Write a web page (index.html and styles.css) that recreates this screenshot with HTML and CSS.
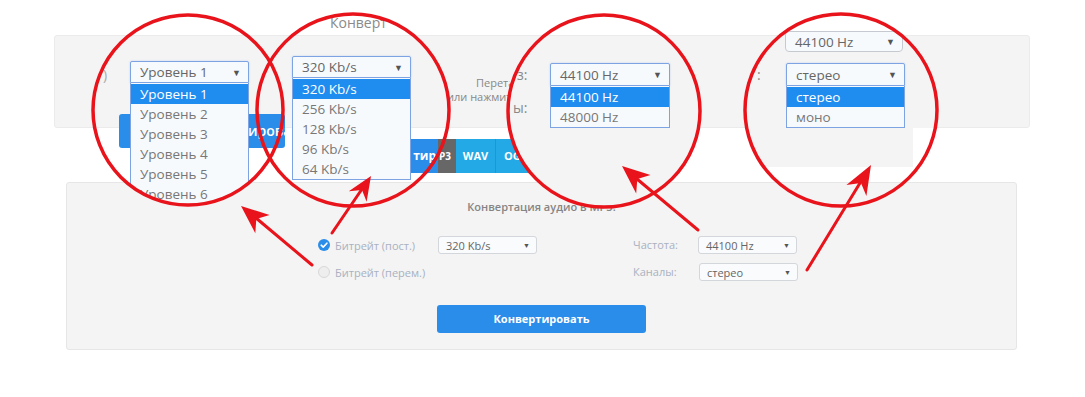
FILE: index.html
```html
<!DOCTYPE html>
<html lang="ru">
<head>
<meta charset="utf-8">
<title>Конвертация аудио в MP3</title>
<link rel="stylesheet" href="styles.css">
</head>
<body>
<div class="page">
  <div class="top-panel">
    <div class="hint">
      <span class="hint-l1">Перетащите</span>
      <span>или нажмите</span>
    </div>
  </div>
  <div class="mid-row">
    <div class="btn-top">Конвертировать</div>
    <div class="tabs">
      <div class="tab tab-blue">тир</div>
      <div class="tab tab-dark">P3</div>
      <div class="tab tab-wav">WAV</div>
      <div class="tab tab-ogg">OGG</div>
    </div>
  </div>
  <div class="panel">
    <div class="panel-title">Конвертация аудио в MP3:</div>
    <div class="form">
      <div class="form-left">
        <div class="radio-label"><span class="radio radio-on"><svg width="12" height="12" viewBox="0 0 12 12"><path d="M3.2 6.2 L5.2 8.1 L8.9 4.2" fill="none" stroke="#fff" stroke-width="1.6" stroke-linecap="round" stroke-linejoin="round"/></svg></span>Битрейт (пост.)</div>
        <div class="sel-sm"><span>320 Kb/s</span><span class="arrow-sm">▼</span></div>
        <div class="radio-label"><span class="radio radio-off"></span>Битрейт (перем.)</div>
        <div></div>
      </div>
      <div class="form-right">
        <div class="field-label">Частота:</div>
        <div class="sel-sm"><span>44100 Hz</span><span class="arrow-sm">▼</span></div>
        <div class="field-label">Каналы:</div>
        <div class="sel-sm sel-shift"><span>стерео</span><span class="arrow-sm">▼</span></div>
      </div>
    </div>
    <div class="btn-main">Конвертировать</div>
  </div>

  <div class="lens lens1">
    <div class="mtext l1-paren">)</div>
    <div class="msel l1-sel"><span>Уровень 1</span><span class="marrow">▼</span></div>
    <div class="mlist l1-list">
      <div class="mitem on">Уровень 1</div>
      <div class="mitem">Уровень 2</div>
      <div class="mitem">Уровень 3</div>
      <div class="mitem">Уровень 4</div>
      <div class="mitem">Уровень 5</div>
      <div class="mitem">Уровень 6</div>
    </div>
  </div>

  <div class="lens lens2">
    <div class="mtext l2-title">Конверт</div>
    <div class="msel l2-sel"><span>320 Kb/s</span><span class="marrow">▼</span></div>
    <div class="mlist l2-list">
      <div class="mitem on">320 Kb/s</div>
      <div class="mitem">256 Kb/s</div>
      <div class="mitem">128 Kb/s</div>
      <div class="mitem">96 Kb/s</div>
      <div class="mitem">64 Kb/s</div>
    </div>
  </div>

  <div class="lens lens3">
    <div class="mtext l3-lab1">з:</div>
    <div class="mtext l3-lab2">ы:</div>
    <div class="msel l3-sel"><span>44100 Hz</span><span class="marrow">▼</span></div>
    <div class="mlist l3-list">
      <div class="mitem on">44100 Hz</div>
      <div class="mitem">48000 Hz</div>
    </div>
  </div>

  <div class="lens lens4">
    <div class="mtext l4-colon">:</div>
    <div class="msel msel-plain l4-sel1"><span>44100 Hz</span><span class="marrow">▼</span></div>
    <div class="msel l4-sel2"><span>стерео</span><span class="marrow">▼</span></div>
    <div class="mlist l4-list">
      <div class="mitem on">стерео</div>
      <div class="mitem">моно</div>
    </div>
  </div>

  <svg class="marks" width="1085" height="397" viewBox="0 0 1085 397">
    <g fill="none" stroke="#e8131b" stroke-width="3.5">
      <circle cx="188" cy="110" r="95"/>
      <circle cx="353" cy="110" r="96"/>
      <circle cx="604" cy="111" r="96"/>
      <circle cx="841" cy="110" r="96"/>
    </g>
    <g stroke="#e8131b" stroke-width="3" stroke-linecap="round">
      <line x1="312" y1="265" x2="256" y2="218"/>
      <line x1="332" y1="233" x2="362" y2="189"/>
      <line x1="698" y1="230" x2="637" y2="179"/>
      <line x1="807" y1="270" x2="860" y2="183"/>
    </g>
    <g fill="#e8131b">
      <polygon points="241,206 269.6,214.9 256.3,219 255.3,233.3"/>
      <polygon points="371,176 366.6,201.8 362,190 348.8,191.2"/>
      <polygon points="622,166 650.5,175 637.3,179 636.2,193.4"/>
      <polygon points="871,165 866.4,195.9 861,183 846.4,185"/>
    </g>
  </svg>
</div>
</body>
</html>
```

FILE: styles.css
```css
body {
  margin: 0;
}

.page {
  position: relative;
  width: 1085px;
  height: 397px;
  overflow: hidden;
  background: #fff;
  box-sizing: border-box;
  padding-top: 35px;
  font-family: "Open Sans", "Noto Sans", sans-serif;
}

.top-panel {
  margin: 0 55px 0 54px;
  height: 93px;
  box-sizing: border-box;
  background: #f4f4f4;
  border: 1px solid #ebebeb;
  border-radius: 3px;
  display: flex;
  padding: 40px 0 0 392px;
}

.hint {
  display: flex;
  flex-direction: column;
  width: 63px;
  overflow: hidden;
  font-size: 11px;
  line-height: 14px;
  color: #888;
  white-space: nowrap;
}

.hint-l1 {
  margin-left: 29px;
}

.mid-row {
  display: flex;
  align-items: flex-start;
  margin-top: -14px;
  height: 59px;
}

.btn-top {
  margin-left: 119px;
  width: 166px;
  height: 34px;
  box-sizing: border-box;
  padding-left: 70px;
  background: #2a8de9;
  border-radius: 3px;
  color: #fff;
  font-size: 14px;
  font-weight: 600;
  line-height: 34px;
  white-space: nowrap;
  overflow: hidden;
}

.tabs {
  display: flex;
  margin: 25px 0 0 115px;
  height: 34px;
}

.tab {
  height: 34px;
  line-height: 34px;
  color: #fff;
  font-size: 11px;
  font-weight: 700;
  box-sizing: border-box;
  white-space: nowrap;
}

.tab-blue {
  width: 38px;
  background: #2a8de9;
  text-align: right;
  padding-right: 2px;
  font-size: 12px;
}

.tab-dark {
  width: 18px;
  background: #676767;
  font-size: 10px;
  padding-left: 1px;
}

.tab-wav {
  width: 40px;
  background: #23a9e5;
  text-align: center;
  border-right: 1px solid #1d97cf;
}

.tab-ogg {
  width: 44px;
  background: #23a9e5;
  padding-left: 8px;
}

.panel {
  margin: 9px 0 0 66px;
  width: 951px;
  height: 168px;
  box-sizing: border-box;
  background: #f4f4f4;
  border: 1px solid #e6e6e6;
  border-radius: 3px;
  padding-top: 17px;
}

.panel-title {
  text-align: center;
  font-size: 11px;
  font-weight: 600;
  color: #858585;
  line-height: 14px;
}

.form {
  display: flex;
  margin-top: 22px;
  padding-left: 251px;
}

.form-left {
  display: grid;
  grid-template-columns: 120px 99px;
  grid-auto-rows: 18px;
  row-gap: 9px;
}

.form-right {
  display: grid;
  grid-template-columns: 65px 100px;
  grid-auto-rows: 18px;
  row-gap: 9px;
  margin-left: 96px;
}

.radio-label {
  display: flex;
  align-items: center;
  gap: 5px;
  height: 18px;
  font-size: 11px;
  color: #a9b1c1;
  white-space: nowrap;
}

.radio {
  width: 12px;
  height: 12px;
  border-radius: 50%;
  box-sizing: border-box;
  display: flex;
}

.radio-on {
  background: #2a8de9;
}

.radio-off {
  background: #eeeeee;
  border: 1px solid #d8d8d8;
}

.field-label {
  font-size: 11px;
  color: #a9b1c1;
  line-height: 18px;
}

.sel-sm {
  width: 99px;
  height: 18px;
  box-sizing: border-box;
  border: 1px solid #d3d6da;
  border-radius: 3px;
  background: #f9fbfd;
  display: flex;
  align-items: center;
  justify-content: space-between;
  padding: 0 6px 0 7px;
  font-size: 11px;
  color: #666;
}

.sel-shift {
  margin-left: 1px;
}

.arrow-sm {
  font-size: 7px;
  color: #555;
}

.btn-main {
  margin: 24px 0 0 370px;
  width: 209px;
  height: 28px;
  background: #2a8de9;
  border-radius: 3px;
  color: #fff;
  font-size: 11px;
  font-weight: 700;
  text-align: center;
  line-height: 28px;
}

/* magnifier lenses (annotation overlays) */
.lens {
  position: absolute;
  border-radius: 50%;
  overflow: hidden;
}

.lens1 {
  left: 93px;
  top: 15px;
  width: 190px;
  height: 190px;
}

.lens2 {
  left: 257px;
  top: 14px;
  width: 192px;
  height: 192px;
}

.lens3 {
  left: 508px;
  top: 15px;
  width: 192px;
  height: 192px;
  background: linear-gradient(#fff 0 20px, #ebebeb 20px 21px, #f4f4f4 21px);
}

.lens4 {
  left: 745px;
  top: 14px;
  width: 192px;
  height: 192px;
  background:
    linear-gradient(#f4f4f4, #f4f4f4) 0 21px / 100% 93px no-repeat,
    linear-gradient(#f4f4f4, #f4f4f4) 0 21px / 168px 132px no-repeat,
    linear-gradient(#e6e6e6, #e6e6e6) 0 168px / 100% 1px no-repeat,
    linear-gradient(#f4f4f4, #f4f4f4) 0 169px / 100% 30px no-repeat,
    linear-gradient(#ebebeb, #ebebeb) 0 20px / 100% 1px no-repeat,
    #fff;
}

.mtext {
  position: absolute;
  font-size: 14px;
  line-height: 18px;
  color: #8a8a8a;
  white-space: nowrap;
}

.msel {
  position: absolute;
  box-sizing: border-box;
  border: 1px solid #7ea3e3;
  border-radius: 2px 2px 0 0;
  background: #f7fafd;
  display: flex;
  align-items: center;
  justify-content: space-between;
  padding: 0 7px 0 9px;
  font-size: 13.5px;
  color: #666;
  box-shadow: 0 0 2px rgba(80, 130, 220, 0.35);
}

.msel-plain {
  border-color: #c6cad0;
  border-radius: 4px;
  box-shadow: none;
}

.marrow {
  font-size: 9px;
  color: #555;
}

.mlist {
  position: absolute;
  box-sizing: border-box;
  border: 1px solid #7ea3e3;
  border-top: none;
  background: #f7fafd;
  padding-top: 1px;
}

.mitem {
  height: 20px;
  line-height: 20px;
  padding-left: 9px;
  font-size: 13.5px;
  color: #777;
  white-space: nowrap;
}

.mitem.on {
  background: #1f8cf0;
  color: #fff;
}

.l1-paren { left: 10px; top: 51px; color: #aaa; }
.l1-sel { left: 37px; top: 46px; width: 119px; height: 22px; }
.l1-list { left: 37px; top: 68px; width: 119px; }

.l2-title { left: 73px; top: 0; }
.l2-sel { left: 35px; top: 42px; width: 119px; height: 22px; }
.l2-list { left: 35px; top: 64px; width: 119px; }

.l3-lab1 { left: 9px; top: 51px; }
.l3-lab2 { left: 5px; top: 84px; }
.l3-sel { left: 42px; top: 48px; width: 120px; height: 23px; }
.l3-list { left: 42px; top: 71px; width: 120px; }

.l4-colon { left: 12px; top: 52px; }
.l4-sel1 { left: 40px; top: 17px; width: 118px; height: 21px; }
.l4-sel2 { left: 41px; top: 49px; width: 119px; height: 23px; }
.l4-list { left: 41px; top: 72px; width: 119px; }

.marks {
  position: absolute;
  left: 0;
  top: 0;
  pointer-events: none;
}
```
